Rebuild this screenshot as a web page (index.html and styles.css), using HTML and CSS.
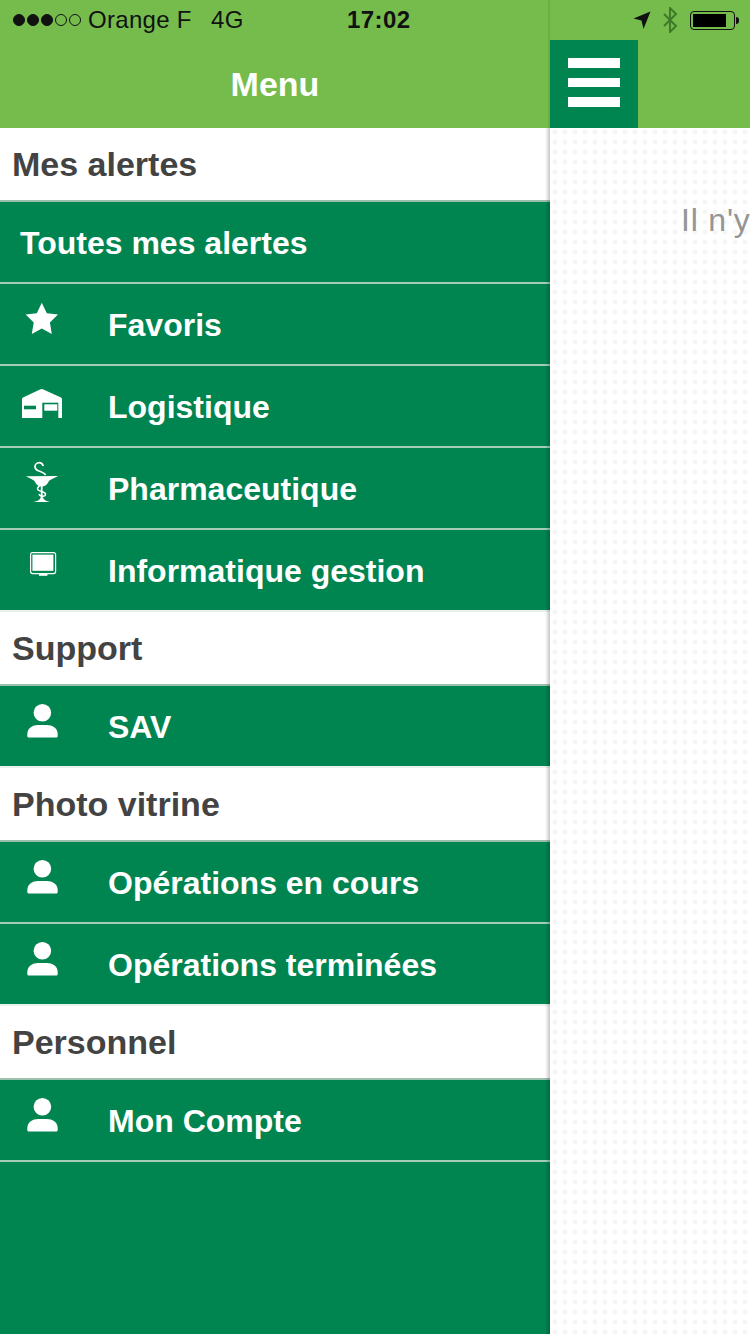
FILE: index.html
```html
<!DOCTYPE html>
<html lang="fr">
<head>
<meta charset="utf-8">
<title>Menu</title>
<link rel="stylesheet" href="styles.css">
</head>
<body>
<svg class="defs" width="0" height="0" aria-hidden="true">
  <symbol id="person" viewBox="0 0 44 44">
    <circle cx="22.4" cy="13.7" r="8.8" fill="#fff"/>
    <path d="M8.3 38.4Q7.3 38.4 7.3 37V35C7.3 29 13 26 18 26H27C32 26 37.7 29 37.7 35V37Q37.7 38.4 36.7 38.4Z" fill="#fff"/>
  </symbol>
</svg>
<div class="app">
  <nav class="drawer">
    <header class="drawer-head">
      <div class="status-left">
        <span class="signal"><i class="dot on"></i><i class="dot on"></i><i class="dot on"></i><i class="dot"></i><i class="dot"></i></span>
        <span class="carrier">Orange F</span>
        <span class="net">4G</span>
        <span class="time">17:02</span>
      </div>
      <h1 class="title">Menu</h1>
    </header>

    <div class="section">Mes alertes</div>
    <a class="row row-plain">Toutes mes alertes</a>
    <a class="row">
      <svg class="icon" viewBox="0 0 44 44"><path d="M21.8 5.7L26.8 16.2L38 17.6L29.9 25.6L31.8 37L21.8 31.5L11.8 37L13.7 25.6L5.6 17.6L16.8 16.2Z" fill="#fff"/></svg>
      Favoris
    </a>
    <a class="row">
      <svg class="icon" viewBox="0 0 44 44">
        <path d="M2 20Q2 19 3 18.5L20 10.5Q21.7 9.7 23.4 10.5L41 18.5Q42 19 42 20V39H2Z" fill="#fff"/>
        <rect x="4" y="26.7" width="12" height="3.6" fill="#008550"/>
        <rect x="22.3" y="23.7" width="16" height="15.6" fill="#008550"/>
        <rect x="24.3" y="25.3" width="13" height="6.4" fill="#fff"/>
      </svg>
      Logistique
    </a>
    <a class="row">
      <svg class="icon" viewBox="0 0 44 44">
        <path d="M6 15.2L38.3 15C32 18 29 19 28.5 21C27 24 24 25.5 21.7 25.5C19 25.5 16.5 24 15 21C14.5 19 11 18 6 15.2Z" fill="#fff"/>
        <path d="M21.7 25V38" stroke="#fff" stroke-width="1.8" fill="none"/>
        <path d="M13.3 41Q20 40 21 36H22.6Q24 40 30 41Z" fill="#fff"/>
        <path d="M23.3 5C22.5 2.5 20.5 1.7 19.3 1.7C16.5 1.7 15 3.8 15 5.7C15 8 16.5 9 18.3 9.7C22 11 25 12.5 25.6 14" fill="none" stroke="#fff" stroke-width="1.7"/>
        <path d="M26.7 17.3C27 22 17 24 17.5 28C18 31 25.5 30 25.5 33C25.5 36 20 36 19 33" fill="none" stroke="#fff" stroke-width="1.5"/>
      </svg>
      Pharmaceutique
    </a>
    <a class="row row-soft">
      <svg class="icon" viewBox="0 0 44 44">
        <rect x="10.6" y="9.6" width="25" height="21" rx="2" fill="none" stroke="#fff" stroke-width="1.2"/>
        <rect x="12.4" y="11.6" width="21" height="16.2" fill="#fff"/>
        <rect x="19" y="31" width="8.4" height="1.8" fill="#fff"/>
      </svg>
      Informatique gestion
    </a>

    <div class="section">Support</div>
    <a class="row row-soft"><svg class="icon"><use href="#person"/></svg>SAV</a>

    <div class="section">Photo vitrine</div>
    <a class="row"><svg class="icon"><use href="#person"/></svg>Opérations en cours</a>
    <a class="row row-soft"><svg class="icon"><use href="#person"/></svg>Opérations terminées</a>

    <div class="section">Personnel</div>
    <a class="row"><svg class="icon"><use href="#person"/></svg>Mon Compte</a>
  </nav>

  <main class="main">
    <header class="main-head">
      <div class="status-right">
        <svg class="s-arrow" viewBox="0 0 18 18"><path d="M17.5 0.5L10.5 18L8.5 9.5L0.5 7.5Z" fill="#111"/></svg>
        <svg class="s-bt" viewBox="0 0 16 26"><path d="M2 7L14 19L8 25V1L14 7L2 19" fill="none" stroke="#3f7a28" stroke-width="2"/></svg>
        <span class="battery"><span class="battery-fill"></span></span>
        <span class="battery-tip"></span>
      </div>
      <button class="burger" aria-label="Menu"><i></i><i></i><i></i></button>
    </header>
    <p class="empty">Il n'y</p>
  </main>
</div>
</body>
</html>
```
FILE: styles.css
```css
* { box-sizing: border-box; }
html, body { margin: 0; padding: 0; }
body {
  width: 750px;
  height: 1334px;
  overflow: hidden;
  font-family: "Liberation Sans", Arial, sans-serif;
  background: #fff;
}
.defs { position: absolute; }
.app { display: flex; width: 750px; height: 1334px; }

.drawer {
  position: relative;
  width: 550px;
  flex: none;
  display: flex;
  flex-direction: column;
  background: #008550;
}
.drawer::after {
  content: "";
  position: absolute;
  top: 128px;
  right: 0;
  bottom: 0;
  width: 5px;
  background: linear-gradient(to right, rgba(0, 0, 0, 0), rgba(0, 0, 0, 0.22));
}
.drawer-head { height: 128px; background: #75bc4c; box-shadow: inset -2px 0 0 rgba(0, 0, 0, 0.08); }
.status-left {
  height: 40px;
  display: flex;
  align-items: center;
  padding-left: 13px;
  font-size: 24px;
  color: #111;
}
.signal { display: flex; gap: 2px; width: 75px; }
.dot {
  width: 12px;
  height: 12px;
  border-radius: 50%;
  border: 1px solid #111;
}
.dot.on { background: #111; }
.carrier { letter-spacing: 0.3px; width: 123px; }
.net { width: 136px; letter-spacing: 0.3px; }
.time { font-weight: bold; letter-spacing: 0.4px; }
.title {
  margin: 0;
  height: 88px;
  display: flex;
  align-items: center;
  justify-content: center;
  font-size: 34px;
  font-weight: bold;
  color: #fff;
}

.section {
  height: 74px;
  display: flex;
  align-items: center;
  padding-left: 12px;
  background: #fff;
  border-bottom: 2px solid #9dbfae;
  font-size: 34px;
  font-weight: bold;
  color: #434343;
}
.row {
  height: 82px;
  display: flex;
  align-items: center;
  padding: 2px 0 0 20px;
  border-bottom: 2px solid #a3cdb8;
  font-size: 32px;
  font-weight: bold;
  color: #fff;
}
.row-soft { border-bottom-color: #e8f1ec; }
.icon {
  width: 44px;
  height: 44px;
  flex: none;
  margin: 0 44px 12px 0;
}

.main {
  flex: 1;
  min-width: 0;
  overflow: hidden;
  background-color: #fff;
  background-image: radial-gradient(circle at 5px 5px, #f5f5f5 1.8px, rgba(255, 255, 255, 0) 3px);
  background-size: 10px 10px;
  background-position: 0 -3px;
}
.main-head { height: 128px; background: #75bc4c; }
.status-right {
  height: 40px;
  display: flex;
  align-items: center;
  padding-left: 83px;
}
.s-arrow { width: 18px; height: 18px; margin-right: 11px; }
.s-bt { width: 16px; height: 26px; margin-right: 12px; }
.battery {
  width: 45px;
  height: 19px;
  padding: 2px;
  border: 1px solid #111;
  border-radius: 4px;
}
.battery-fill { display: block; width: 33px; height: 13px; background: #000; }
.battery-tip {
  width: 3px;
  height: 7px;
  background: #111;
  border-radius: 0 3px 3px 0;
  margin-left: 1px;
}
.burger {
  width: 88px;
  height: 88px;
  display: flex;
  flex-direction: column;
  align-items: center;
  justify-content: center;
  gap: 10px;
  padding: 0 0 3px;
  border: 0;
  background: #008550;
}
.burger i { display: block; width: 52px; height: 9.5px; background: #fff; }
.empty {
  margin: 70px 0 0 131px;
  font-size: 32px;
  letter-spacing: 0.8px;
  line-height: 44px;
  color: #959595;
  white-space: nowrap;
}
```
